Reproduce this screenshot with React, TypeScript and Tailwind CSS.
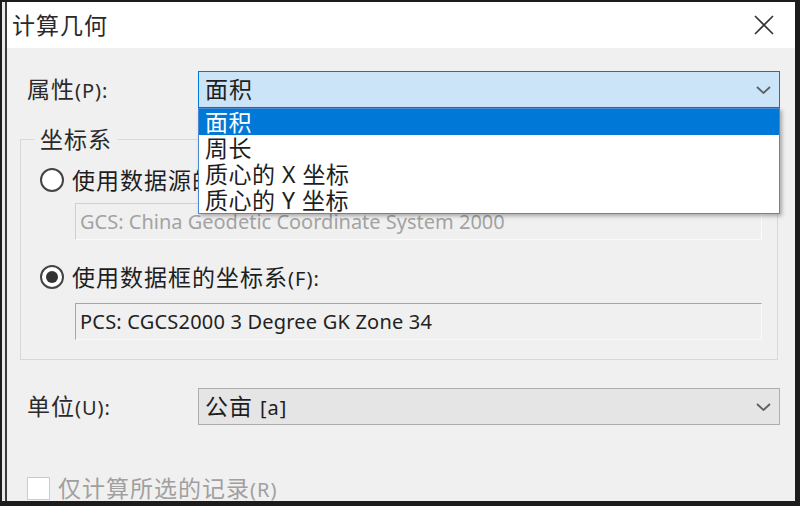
import React from 'react';

const FONT = "font-['Noto_Sans','Noto_Sans_CJK_SC',sans-serif]";

const OPTIONS = ['面积', '周长', '质心的 X 坐标', '质心的 Y 坐标'];

function Chevron() {
  return (
    <svg width="15" height="8" viewBox="0 0 15 8" className="shrink-0">
      <polyline points="1,1 7.5,7 14,1" fill="none" stroke="#5f5f5f" strokeWidth="1.8" />
    </svg>
  );
}

function Radio({ checked }: { checked?: boolean }) {
  return (
    <div className="size-[24px] shrink-0 rounded-full border-2 border-[#444] bg-white flex items-center justify-center">
      {checked && <div className="size-[12px] rounded-full bg-[#333]" />}
    </div>
  );
}

function Latin({ children }: { children: React.ReactNode }) {
  return <span className="text-[20px] tracking-[1px]">{children}</span>;
}

export default function App() {
  return (
    <div className={`w-[800px] h-[506px] overflow-hidden bg-[#1c1c1c] pt-[2px] pl-[2px] pr-[5px] pb-[5px] ${FONT}`}>
      <div className="flex h-full">
        <div className="w-[3px] bg-[#e9e9e9]" />
        <div className="w-[2px] bg-[#3a3a3a]" />

        <div className="flex-1 flex flex-col bg-[#f0f0f0] text-[#1e1e1e] overflow-hidden">
          {/* Title bar */}
          <div className="h-[46px] shrink-0 bg-white flex items-center justify-between pl-[5px] pr-[21px]">
            <span className="text-[23px] tracking-[1px] text-[#2a2a2a]">计算几何</span>
            <svg width="20" height="20" viewBox="0 0 20 20">
              <path d="M1 1 L19 19 M19 1 L1 19" stroke="#333" strokeWidth="1.6" />
            </svg>
          </div>

          {/* Property row */}
          <div className="mt-[23px] h-[37px] shrink-0 flex items-center pl-[20px] pr-[15px]">
            <div className="w-[171px] text-[23px] tracking-[1px] text-[#2a2a2a]">
              属性<Latin>(P):</Latin>
            </div>
            <div className="relative flex-1 h-full">
              <div className="h-full border border-[#0078d7] bg-[#cce4f7] flex items-center justify-between pl-[6px] pr-[8px]">
                <span className="text-[23px] tracking-[1px]">面积</span>
                <Chevron />
              </div>
              {/* Open dropdown list */}
              <div className="absolute left-0 right-0 top-full z-10 bg-white border border-[#4a8ad4] shadow-[2px_2px_4px_rgba(0,0,0,0.3)]">
                {OPTIONS.map((opt, i) => (
                  <div
                    key={opt}
                    className={`h-[26px] leading-[26px] pl-[6px] text-[23px] tracking-[0.5px] whitespace-pre ${
                      i === 0 ? 'bg-[#0078d7] text-white' : 'text-[#1e1e1e]'
                    }`}
                  >
                    {opt}
                  </div>
                ))}
              </div>
            </div>
          </div>

          {/* Coordinate system group */}
          <fieldset className="mt-[16px] ml-[13px] mr-[17px] border border-[#d8d8d8] px-0 pb-[19px] shrink-0">
            <legend className="ml-[13px] px-[6px] text-[23px] leading-[30px] tracking-[1px] text-[#2a2a2a]">坐标系</legend>

            <div className="mt-[11px] h-[30px] flex items-center gap-[8px] pl-[19px]">
              <Radio />
              <span className="text-[23px] tracking-[1px] whitespace-nowrap">
                使用数据源的坐标系<Latin>(D):</Latin>
              </span>
            </div>
            <div className="mt-[8px] ml-[54px] mr-[15px] h-[37px] flex items-center pl-[4px] border border-t-[#d0d0d0] border-l-[#d0d0d0] border-b-[#fafafa] border-r-[#fafafa] text-[20px] text-[#a3a3a3] whitespace-nowrap overflow-hidden">
              GCS: China Geodetic Coordinate System 2000
            </div>

            <div className="mt-[22px] h-[30px] flex items-center gap-[8px] pl-[19px]">
              <Radio checked />
              <span className="text-[23px] tracking-[1px] whitespace-nowrap">
                使用数据框的坐标系<Latin>(F):</Latin>
              </span>
            </div>
            <div className="mt-[11px] ml-[54px] mr-[15px] h-[37px] flex items-center pl-[4px] border border-t-[#a6a6a6] border-l-[#a6a6a6] border-b-[#fafafa] border-r-[#fafafa] text-[20px] tracking-[0.2px] text-[#222] whitespace-nowrap overflow-hidden">
              PCS: CGCS2000 3 Degree GK Zone 34
            </div>
          </fieldset>

          {/* Unit row */}
          <div className="mt-[28px] h-[37px] shrink-0 flex items-center pl-[20px] pr-[15px]">
            <div className="w-[171px] text-[23px] tracking-[1px] text-[#2a2a2a]">
              单位<Latin>(U):</Latin>
            </div>
            <div className="flex-1 h-full border border-[#adadad] bg-[#e5e5e5] flex items-center justify-between pl-[6px] pr-[8px]">
              <span className="text-[23px] tracking-[1px]">
                公亩 <Latin>[a]</Latin>
              </span>
              <Chevron />
            </div>
          </div>

          {/* Selected records checkbox */}
          <div className="mt-[52px] h-[23px] shrink-0 flex items-center gap-[8px] pl-[20px]">
            <div className="size-[23px] shrink-0 border border-[#cccccc] bg-white" />
            <span className="text-[23px] tracking-[1px] text-[#a0a0a0] whitespace-nowrap">
              仅计算所选的记录<Latin>(R)</Latin>
            </span>
          </div>
        </div>
      </div>
    </div>
  );
}
